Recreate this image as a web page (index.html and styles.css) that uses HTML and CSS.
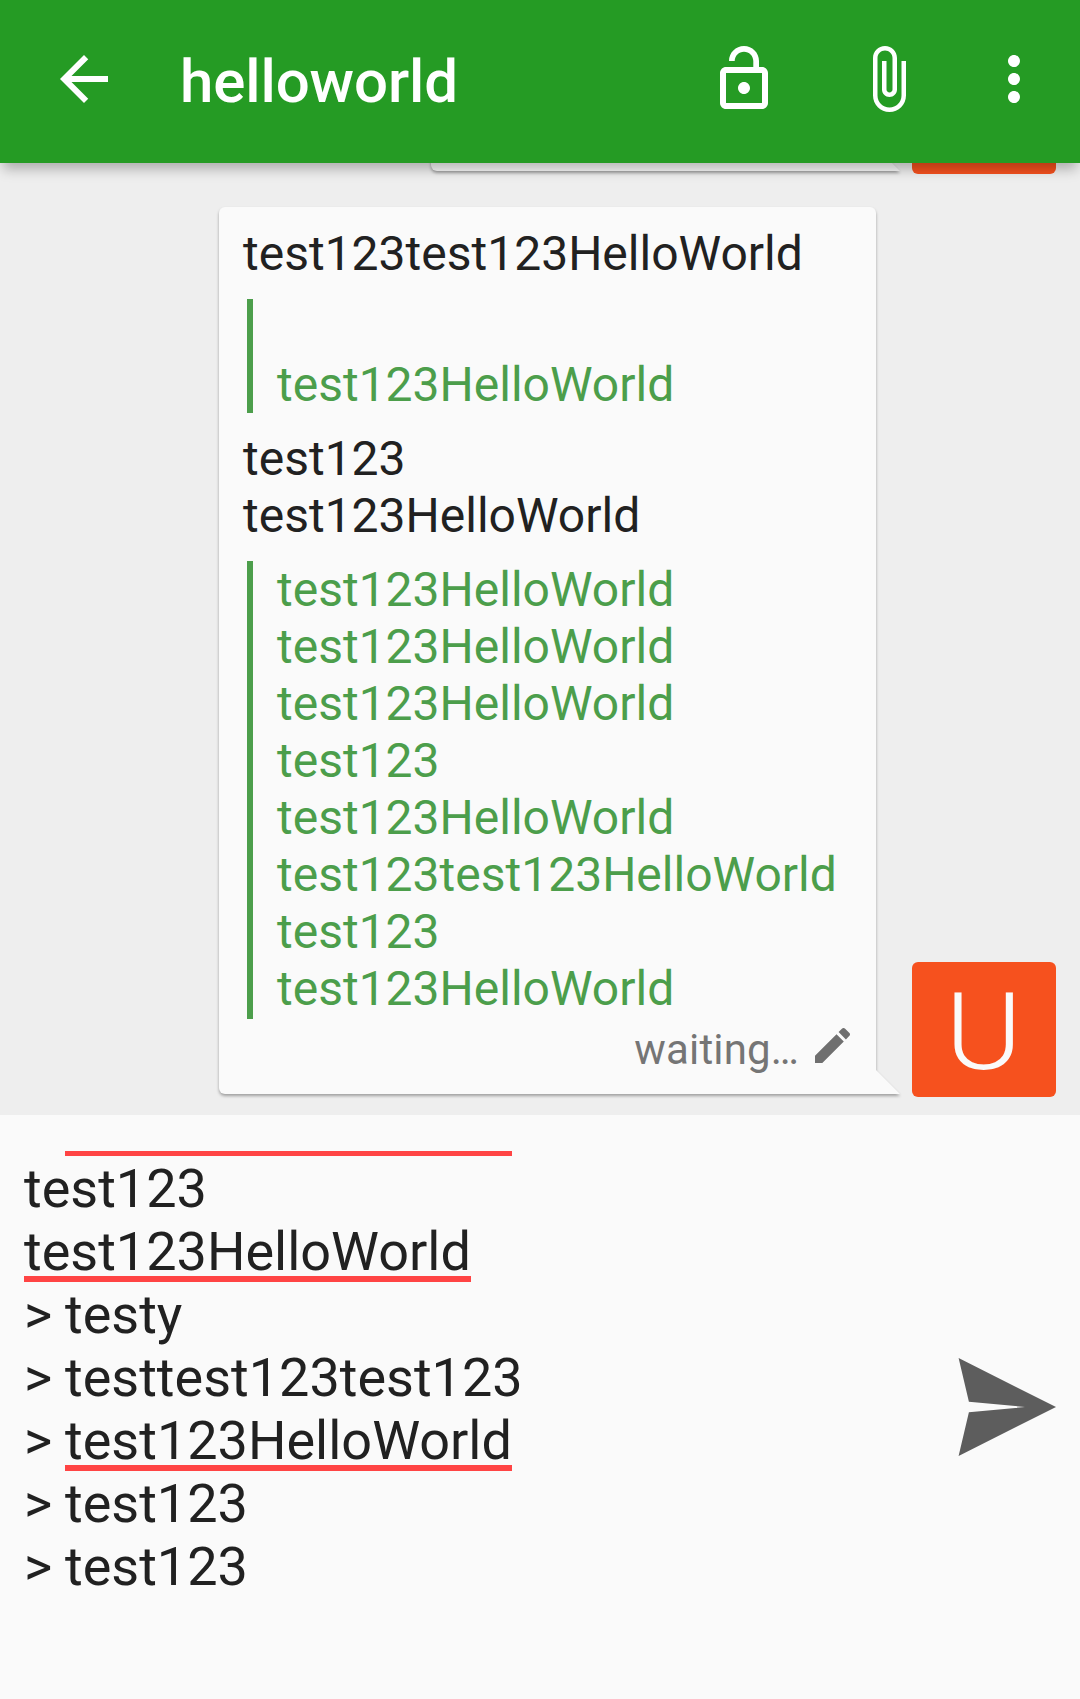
FILE: index.html
```html
<!DOCTYPE html>
<html lang="en">
<head>
<meta charset="utf-8">
<title>helloworld</title>
<link rel="stylesheet" href="styles.css">
</head>
<body>
<div class="app">
  <header class="toolbar">
    <svg class="icon" viewBox="0 0 24 24"><path d="M20 11H7.83l5.59-5.59L12 4l-8 8 8 8 1.41-1.41L7.83 13H20v-2z"/></svg>
    <h1 class="title">helloworld</h1>
    <svg class="icon icon-lock" viewBox="0 0 24 24"><path d="M12 17c1.1 0 2-.9 2-2s-.9-2-2-2-2 .9-2 2 .9 2 2 2zm6-9h-1V6c0-2.76-2.24-5-5-5S7 3.24 7 6h1.9c0-1.71 1.39-3.1 3.1-3.1 1.71 0 3.1 1.39 3.1 3.1v2H6c-1.1 0-2 .9-2 2v10c0 1.1.9 2 2 2h12c1.1 0 2-.9 2-2V10c0-1.1-.9-2-2-2zm0 12H6V10h12v10z"/></svg>
    <svg class="icon icon-clip" viewBox="0 0 24 24"><path d="M16.5 6v11.5c0 2.21-1.79 4-4 4s-4-1.79-4-4V5c0-1.38 1.12-2.5 2.5-2.5s2.5 1.12 2.5 2.5v10.5c0 .55-.45 1-1 1s-1-.45-1-1V6H10v9.5c0 1.38 1.12 2.5 2.5 2.5s2.5-1.12 2.5-2.5V5c0-2.21-1.79-4-4-4S7 2.79 7 5v12.5c0 3.04 2.46 5.5 5.5 5.5s5.5-2.46 5.5-5.5V6h-1.5z"/></svg>
    <svg class="icon" viewBox="0 0 24 24"><path d="M12 8c1.1 0 2-.9 2-2s-.9-2-2-2-2 .9-2 2 .9 2 2 2zm0 2c-1.1 0-2 .9-2 2s.9 2 2 2 2-.9 2-2-.9-2-2-2zm0 6c-1.1 0-2 .9-2 2s.9 2 2 2 2-.9 2-2-.9-2-2-2z"/></svg>
  </header>

  <main class="chat">
    <div class="row">
      <div class="bubble bubble-scrolled"></div>
      <div class="avatar"></div>
    </div>
    <div class="row">
      <div class="bubble">
        <p>test123test123HelloWorld</p>
        <blockquote><br>test123HelloWorld</blockquote>
        <p>test123<br>test123HelloWorld</p>
        <blockquote class="quote-last">test123HelloWorld<br>test123HelloWorld<br>test123HelloWorld<br>test123<br>test123HelloWorld<br>test123test123HelloWorld<br>test123<br>test123HelloWorld</blockquote>
        <div class="meta">
          <span class="status">waiting…</span>
          <svg class="pencil" viewBox="3 3 18 18"><path d="M3 17.25V21h3.75L17.81 9.94l-3.75-3.75L3 17.25zM20.71 7.04c.39-.39.39-1.02 0-1.41l-2.34-2.34c-.39-.39-1.02-.39-1.41 0l-1.83 1.83 3.75 3.75 1.83-1.83z"/></svg>
        </div>
      </div>
      <div class="avatar"><span class="initial">U</span></div>
    </div>
  </main>

  <footer class="composer">
    <div class="input">
      <div class="clipped-line"></div>
      <div>test123</div>
      <div><span class="misspelt">test123HelloWorld</span></div>
      <div>&gt; testy</div>
      <div>&gt; testtest123test123</div>
      <div>&gt; <span class="misspelt">test123HelloWorld</span></div>
      <div>&gt; test123</div>
      <div>&gt; test123</div>
    </div>
    <svg class="send" viewBox="0 0 98 98"><path d="M0.6 0L98 49 0.6 98 10.9 54.3 67 49 10.9 43.7z"/></svg>
  </footer>
</div>
</body>
</html>
```
FILE: styles.css
```css
* { box-sizing: border-box; margin: 0; padding: 0; }

body {
  font-family: Roboto, "Liberation Sans", sans-serif;
  color: #212121;
  background: #fafafa;
}

.app {
  display: flex;
  flex-direction: column;
  width: 1080px;
  height: 1699px;
  overflow: hidden;
}

/* Toolbar */
.toolbar {
  position: relative;
  z-index: 1;
  display: flex;
  align-items: center;
  flex: none;
  height: 163px;
  padding: 0 30px 5px 48px;
  background: #259b24;
  box-shadow: 0 9px 12px -3px rgba(0, 0, 0, .28);
}

.icon { flex: none; width: 72px; height: 72px; fill: #fff; }
.icon-lock { margin-right: 72px; }
.icon-clip { margin-right: 54px; }

.title {
  flex: 1;
  padding: 5px 0 0 60px;
  font-size: 60px;
  font-weight: 500;
  letter-spacing: -.1px;
  line-height: 70px;
  color: #fff;
}

/* Messages */
.chat {
  display: flex;
  flex-direction: column;
  justify-content: flex-end;
  flex: none;
  gap: 33px;
  height: 952px;
  padding: 0 24px 18px;
  overflow: hidden;
  background: #eee;
}

.row {
  display: flex;
  justify-content: flex-end;
  align-items: flex-end;
  flex: none;
  gap: 36px;
}

.bubble {
  position: relative;
  width: 657px;
  margin-bottom: 3px;
  padding: 18px 0 19px 24px;
  border-radius: 6px 6px 0 6px;
  background: #fafafa;
  font-size: 48px;
  line-height: 57px;
  filter: drop-shadow(0 2.5px 1.5px rgba(0, 0, 0, .33));
}

.bubble::after {
  content: "";
  position: absolute;
  left: 100%;
  bottom: 0;
  width: 24px;
  height: 24px;
  background: #fafafa;
  clip-path: polygon(0 0, 100% 100%, 0 100%);
}

.bubble-scrolled { width: 445px; height: 120px; }

blockquote {
  margin: 17px 0 17px 4px;
  padding-left: 24px;
  border-left: 6px solid #4c9e4b;
  color: #4c9e4b;
}

.quote-last { margin-bottom: 6px; padding-bottom: 2px; }

.meta {
  display: flex;
  justify-content: flex-end;
  gap: 16px;
  padding-right: 26px;
  font-size: 42px;
  line-height: 50px;
  color: #757575;
}

.status { letter-spacing: .15px; }

.pencil { width: 35px; height: 35px; margin-top: 3px; fill: #6f6f6f; }

.avatar {
  flex: none;
  width: 144px;
  height: 135px;
  border-radius: 6px;
  background: #f6511e;
  color: #fafafa;
  font-size: 108px;
  font-weight: 300;
  line-height: 141px;
  text-align: center;
}

.initial { display: inline-block; transform: scaleX(1.08); }

/* Message input */
.composer {
  display: flex;
  align-items: center;
  justify-content: space-between;
  flex: 1;
  padding: 0 24px;
}

.input {
  align-self: flex-start;
  margin-top: 36px;
  font-size: 54px;
  line-height: 63px;
  word-spacing: -.6px;
}

.clipped-line {
  width: 447px;
  height: 6px;
  margin-left: 41px;
  border-bottom: 1px solid #fafafa;
  background: #f44;
}

.misspelt {
  display: inline-block;
  height: 63px;
  vertical-align: top;
  background: linear-gradient(#f44, #f44) 0 56px / 100% 6px no-repeat;
}

.send { width: 98px; height: 98px; fill: #5d5d5d; }
```
